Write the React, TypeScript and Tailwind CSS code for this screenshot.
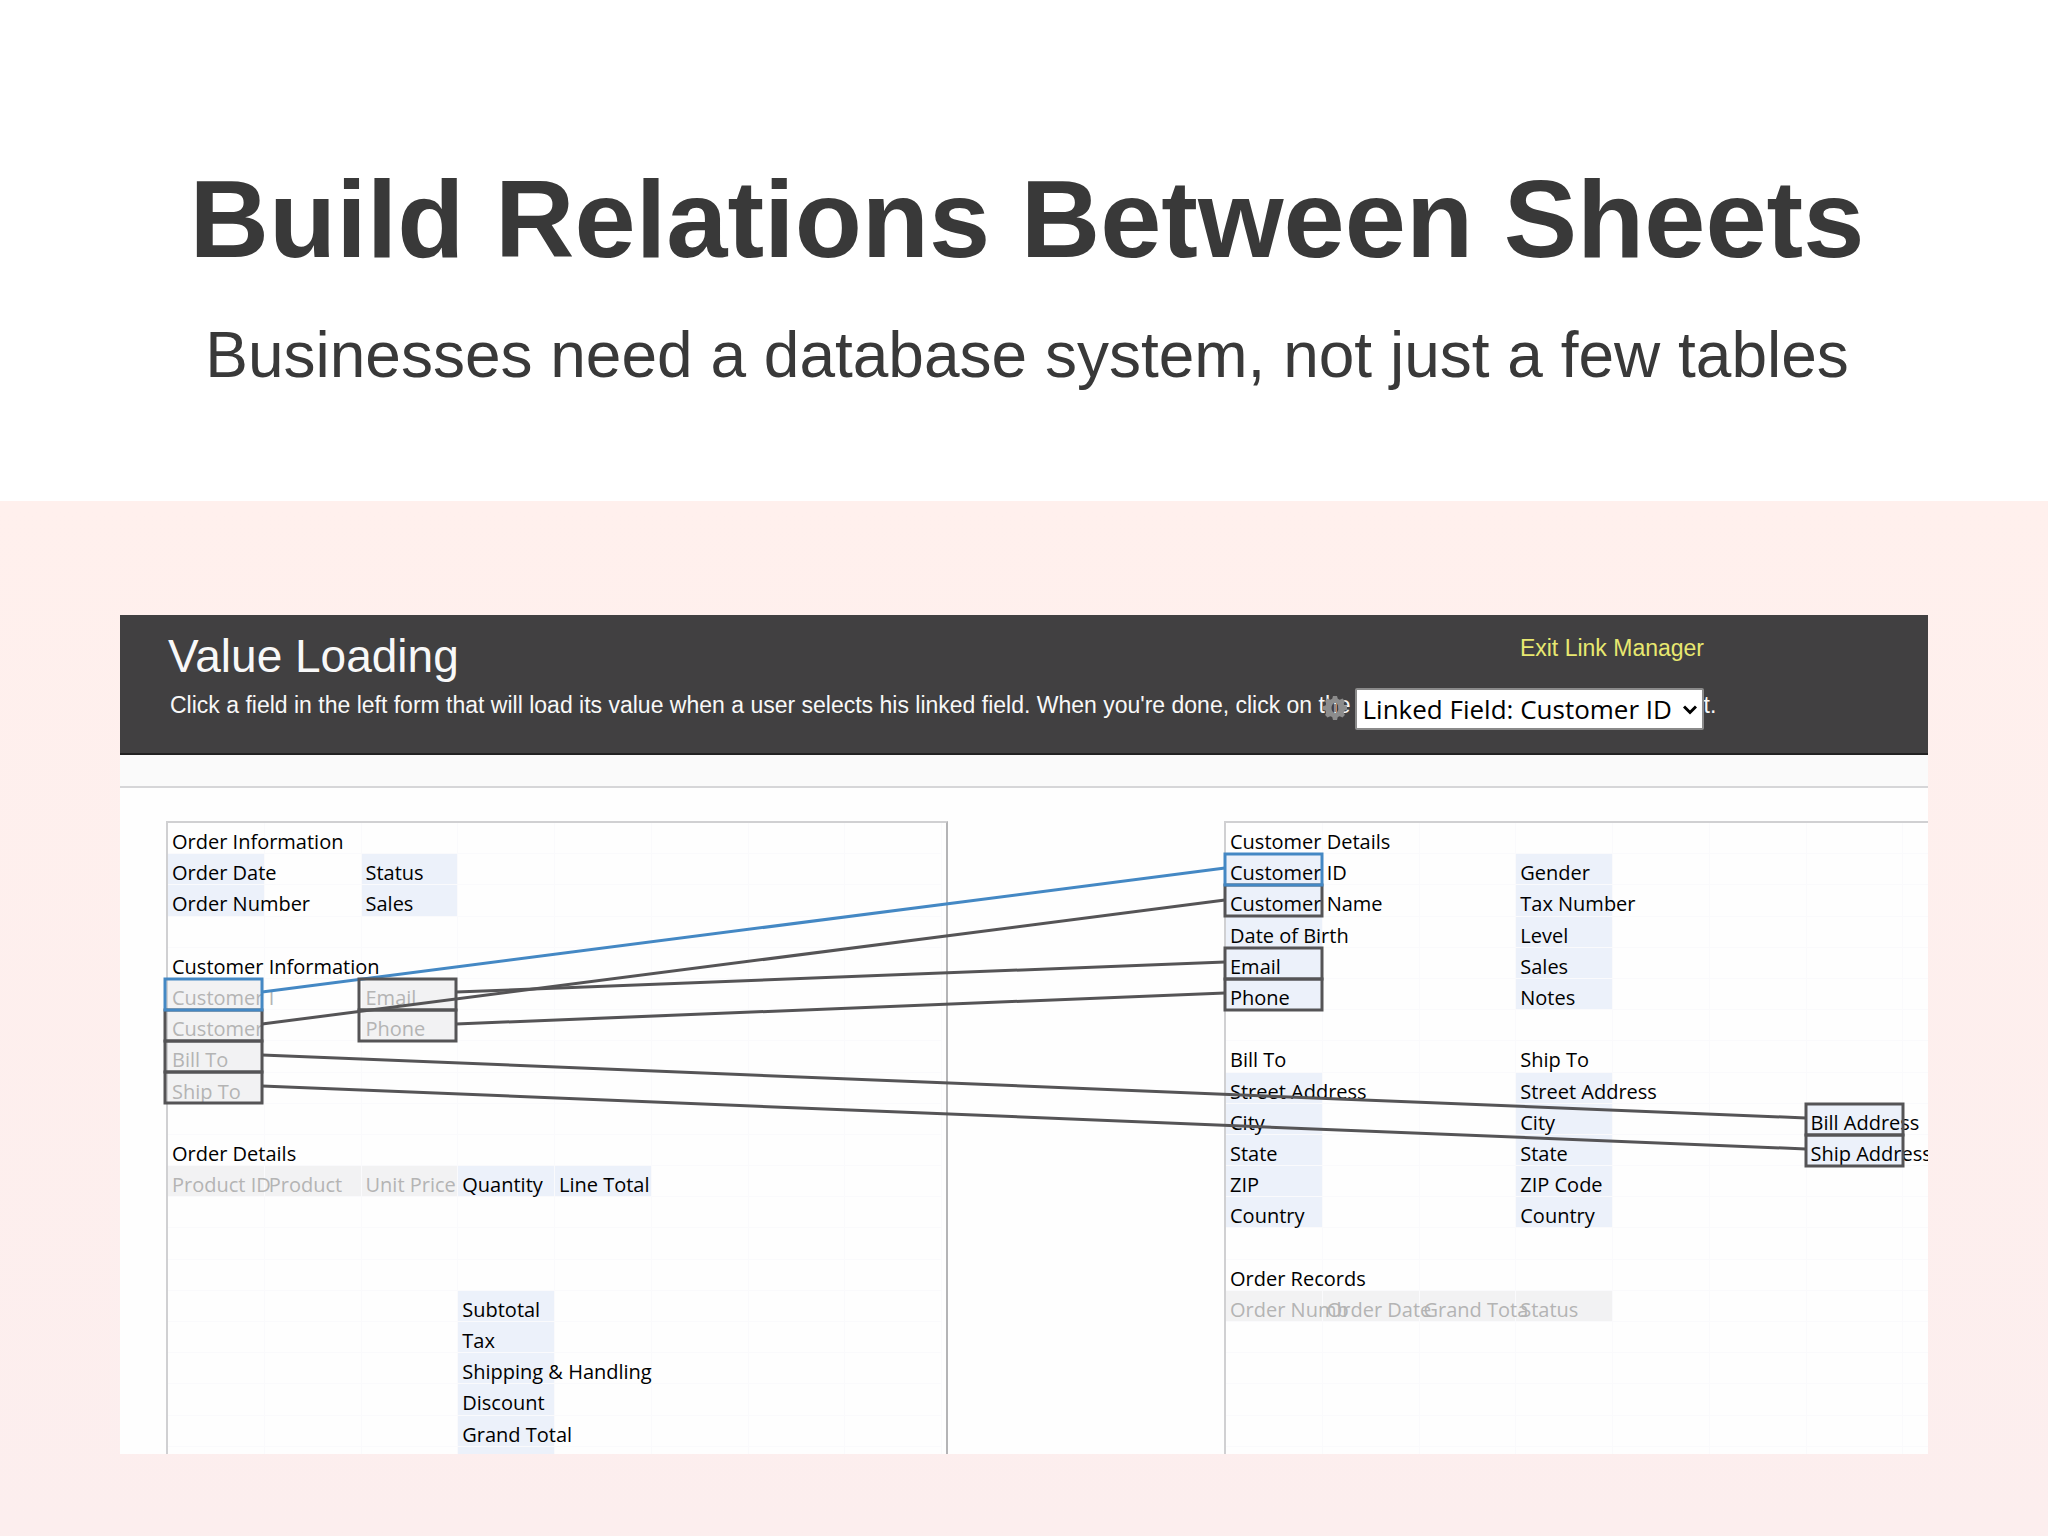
import React from 'react';

type Tone = 'title' | 'field' | 'locked';

interface Cell {
    row: number;
    col: number;
    text: string;
    tone: Tone;
}

interface Point {
    x: number;
    y: number;
}

interface Link {
    from: Point;
    to: Point;
    active?: boolean;
}

interface Frame {
    x: number;
    y: number;
    active?: boolean;
}

const COLS = 8;
const ROWS = 21;

const cell = (row: number, col: number, text: string, tone: Tone = 'field'): Cell => ({ row, col, text, tone });

const ORDER_CELLS: Cell[] = [
    cell(0, 0, 'Order Information', 'title'),
    cell(1, 0, 'Order Date'),
    cell(1, 2, 'Status'),
    cell(2, 0, 'Order Number'),
    cell(2, 2, 'Sales'),
    cell(4, 0, 'Customer Information', 'title'),
    cell(5, 0, 'Customer I', 'locked'),
    cell(5, 2, 'Email', 'locked'),
    cell(6, 0, 'Customer', 'locked'),
    cell(6, 2, 'Phone', 'locked'),
    cell(7, 0, 'Bill To', 'locked'),
    cell(8, 0, 'Ship To', 'locked'),
    cell(10, 0, 'Order Details', 'title'),
    cell(11, 0, 'Product ID', 'locked'),
    cell(11, 1, 'Product', 'locked'),
    cell(11, 2, 'Unit Price', 'locked'),
    cell(11, 3, 'Quantity'),
    cell(11, 4, 'Line Total'),
    cell(15, 3, 'Subtotal'),
    cell(16, 3, 'Tax'),
    cell(17, 3, 'Shipping & Handling'),
    cell(18, 3, 'Discount'),
    cell(19, 3, 'Grand Total'),
    cell(20, 3, ''),
];

const CUSTOMER_CELLS: Cell[] = [
    cell(0, 0, 'Customer Details', 'title'),
    cell(1, 0, 'Customer ID'),
    cell(1, 3, 'Gender'),
    cell(2, 0, 'Customer Name'),
    cell(2, 3, 'Tax Number'),
    cell(3, 0, 'Date of Birth'),
    cell(3, 3, 'Level'),
    cell(4, 0, 'Email'),
    cell(4, 3, 'Sales'),
    cell(5, 0, 'Phone'),
    cell(5, 3, 'Notes'),
    cell(7, 0, 'Bill To', 'title'),
    cell(7, 3, 'Ship To', 'title'),
    cell(8, 0, 'Street Address'),
    cell(8, 3, 'Street Address'),
    cell(9, 0, 'City'),
    cell(9, 3, 'City'),
    cell(9, 6, 'Bill Address'),
    cell(10, 0, 'State'),
    cell(10, 3, 'State'),
    cell(10, 6, 'Ship Address'),
    cell(11, 0, 'ZIP'),
    cell(11, 3, 'ZIP Code'),
    cell(12, 0, 'Country'),
    cell(12, 3, 'Country'),
    cell(14, 0, 'Order Records', 'title'),
    cell(15, 0, 'Order Numb', 'locked'),
    cell(15, 1, 'Order Date', 'locked'),
    cell(15, 2, 'Grand Tota', 'locked'),
    cell(15, 3, 'Status', 'locked'),
];

// Active items come last so they are painted on top
const FRAMES: Frame[] = [
    { x: 45, y: 222 },
    { x: 45, y: 253 },
    { x: 45, y: 284 },
    { x: 239, y: 191 },
    { x: 239, y: 222 },
    { x: 1105, y: 97 },
    { x: 1105, y: 160 },
    { x: 1105, y: 191 },
    { x: 1686, y: 316 },
    { x: 1686, y: 347 },
    { x: 45, y: 191, active: true },
    { x: 1105, y: 66, active: true },
];

const LINKS: Link[] = [
    { from: { x: 142, y: 236 }, to: { x: 1105, y: 112 } },
    { from: { x: 336, y: 204 }, to: { x: 1105, y: 174 } },
    { from: { x: 336, y: 236 }, to: { x: 1105, y: 205 } },
    { from: { x: 142, y: 267 }, to: { x: 1686, y: 330 } },
    { from: { x: 142, y: 298 }, to: { x: 1686, y: 361 } },
    { from: { x: 142, y: 204 }, to: { x: 1105, y: 80 }, active: true },
];

const TONE_CLASSES: Record<Tone, string> = {
    title: 'text-black',
    field: 'bg-[#ecf1fa] text-black',
    locked: 'bg-[#f2f2f3] text-[#b4b4b4]',
};

const strokeClass = (active?: boolean) => (active ? 'stroke-[#4488c4]' : 'stroke-[#555456]');

const FormSheet: React.FC<{ label: string; cells: Cell[] }> = ({ label, cells }) => (
    <section
        aria-label={label}
        className="h-[720px] w-[782px] shrink-0 border-2 border-[#d0d0d2] border-r-[#b4b4b6]"
    >
        <div className="grid h-[655px] w-[774px] grid-cols-8 grid-rows-[repeat(21,minmax(0,1fr))]">
            {Array.from({ length: ROWS * COLS }, (_, i) => {
                const row = Math.floor(i / COLS);
                const col = i % COLS;
                const item = cells.find((c) => c.row === row && c.col === col);
                return (
                    <div key={i} className="min-w-0 border-r border-b border-[#fafafc]">
                        {item && (
                            <div className={`h-full pl-1 text-[20px] leading-[38px] whitespace-nowrap ${TONE_CLASSES[item.tone]}`}>
                                {/* positioned so that long labels stay above the next cell's fill */}
                                <span className="relative">{item.text}</span>
                            </div>
                        )}
                    </div>
                );
            })}
        </div>
    </section>
);

const Connections: React.FC = () => (
    <svg className="pointer-events-none absolute top-0 left-0 h-[666px] w-[1808px] fill-none" strokeWidth={3} aria-hidden="true">
        {LINKS.map((l, i) => (
            <line key={i} x1={l.from.x} y1={l.from.y} x2={l.to.x} y2={l.to.y} className={strokeClass(l.active)} />
        ))}
        {FRAMES.map((f, i) => (
            <rect key={i} x={f.x} y={f.y} width={97} height={31} className={strokeClass(f.active)} />
        ))}
    </svg>
);

const GearIcon: React.FC = () => (
    <svg viewBox="0 0 24 24" className="h-6 w-6" aria-hidden="true">
        <path
            fill="#8c8c8c"
            fillRule="evenodd"
            d="M10 0h4l.8 2.800 2 .9L19.500 2.400l2.400 2.600-1.200 2.700.8 1.900 2.500.7v3.400l-2.500.8-.8 1.900 1.200 2.600-2.400 2.500-2.700-1.300-2 .9L14 24h-4l-.8-2.900-2-.9-2.700 1.300L2.100 19l1.200-2.600-.8-1.900L0 13.700v-3.400l2.500-.7.8-1.900L2.100 5l2.400-2.600 2.700 1.300 2-.9zM12 7a3.500 5 0 1 0 0 10 3.500 5 0 1 0 0-10z"
        />
        <path fill="#8c8c8c" d="M11 8h2v8h-2z" />
    </svg>
);

const App: React.FC = () => {
    return (
        <div className="flex min-h-screen flex-col bg-white font-['Liberation_Sans',Arial,sans-serif]">
            <header className="flex h-[501px] flex-col items-center pt-[151px] pl-[6px] text-center text-[#393939]">
                <h1 className="text-[110px] leading-[136px] font-bold whitespace-nowrap">Build Relations Between Sheets</h1>
                <p className="mt-[28px] text-[64px] leading-[80px] whitespace-nowrap">
                    Businesses need a database system, not just a few tables
                </p>
            </header>

            <main className="grow bg-linear-to-b from-[#fff0ed] to-[#fceeee] px-[120px] pt-[114px] pb-[82px]">
                <div className="overflow-hidden bg-[#fefefe]">
                    <div className="h-[140px] border-b-2 border-[#222222] bg-[#414041] pl-[48px] text-[#f8f8f8]">
                        <div className="flex w-[1536px] items-start justify-between pt-4">
                            <h2 className="text-[46px] leading-[50px]">Value Loading</h2>
                            <a href="#exit" className="text-[23px] leading-[34px] text-[#e8e870]">
                                Exit Link Manager
                            </a>
                        </div>
                        <div className="flex items-start pt-[7px] pl-[2px] text-[23px] leading-[34px] whitespace-nowrap">
                            <p>
                                Click a field in the left form that will load its value when a user selects his linked field. When you're done, click on the
                            </p>
                            <button type="button" aria-label="Field settings" className="relative -ml-[28px] pt-2">
                                <GearIcon />
                            </button>
                            <div className="relative ml-2">
                                <select
                                    aria-label="Linked field"
                                    className="block h-[42px] w-[349px] appearance-none rounded-xs border-2 border-[#8a8a8a] bg-white pl-[6px] font-['Open_Sans','Noto_Sans',sans-serif] text-[26px] leading-[38px] text-black"
                                >
                                    <option>Linked Field: Customer ID</option>
                                </select>
                                <svg viewBox="0 0 14 10" className="pointer-events-none absolute top-[17px] right-[7px] h-[10px] w-[14px] fill-none stroke-black" strokeWidth={3}>
                                    <path d="M1 1.500 7 7.500 13 1.500" />
                                </svg>
                            </div>
                            <span>t.</span>
                        </div>
                    </div>
                    <div className="h-[33px] border-b-2 border-[#d6d6d8] bg-[#fafafa]" />

                    <div className="relative flex h-[666px] gap-[276px] overflow-hidden pt-[33px] pl-[46px] font-['Open_Sans','Noto_Sans',sans-serif]">
                        <FormSheet label="Order form" cells={ORDER_CELLS} />
                        <FormSheet label="Customer form" cells={CUSTOMER_CELLS} />
                        <Connections />
                    </div>
                </div>
            </main>
        </div>
    );
};

export default App;
